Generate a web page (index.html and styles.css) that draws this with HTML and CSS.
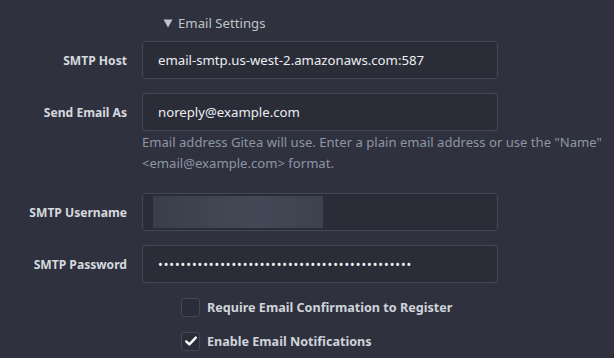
FILE: index.html
```html
<!DOCTYPE html>
<html lang="en">
<head>
    <meta charset="UTF-8">
    <title>Email Settings</title>
    <link rel="stylesheet" href="styles.css">
</head>
<body>
    <div class="settings">
        <div class="section-title">
            <svg class="caret" width="10" height="9" viewBox="0 0 10 9"><path d="M0.5 0.5 H9.5 L5 8.5 Z" fill="#bfc3cc"/></svg>
            Email Settings
        </div>

        <div class="field">
            <label for="smtpHost">SMTP Host</label>
            <input id="smtpHost" type="text" value="email-smtp.us-west-2.amazonaws.com:587">
        </div>

        <div class="field">
            <label for="sendAs">Send Email As</label>
            <input id="sendAs" type="text" value="noreply@example.com">
            <p class="help">Email address Gitea will use. Enter a plain email address or use the "Name" &lt;email@example.com&gt; format.</p>
        </div>

        <div class="field spaced">
            <label for="smtpUser">SMTP Username</label>
            <div class="masked">
                <input id="smtpUser" type="text" value="">
                <span class="blur"></span>
            </div>
        </div>

        <div class="field">
            <label for="smtpPass">SMTP Password</label>
            <input id="smtpPass" type="password" value="ABCDEFGHIJKLMNOPQRSTUVWXYZabcdefghijklmnopqrs">
        </div>

        <div class="check-row">
            <span class="box"></span>
            <span class="check-label">Require Email Confirmation to Register</span>
        </div>
        <div class="check-row">
            <span class="box checked">
                <svg width="14" height="14" viewBox="0 0 14 14"><path d="M2.2 7.4 L5.4 10.4 L11.8 3.6" fill="none" stroke="#ffffff" stroke-width="2.4" stroke-linecap="round" stroke-linejoin="round"/></svg>
            </span>
            <span class="check-label">Enable Email Notifications</span>
        </div>
    </div>
</body>
</html>
```

FILE: styles.css
```css
/* Reset */
* {
    margin: 0;
    padding: 0;
    box-sizing: border-box;
}

body {
    background-color: #2f323e;
    font-family: "Noto Sans", "Open Sans", sans-serif;
    color: #dcdee3;
    width: 614px;
    height: 358px;
    overflow: hidden;
}

.settings {
    padding-top: 13px;
}

.section-title {
    display: flex;
    align-items: center;
    margin-left: 163px;
    height: 20px;
    line-height: 20px;
    font-size: 13.2px;
    color: #bfc3cc;
}

.caret {
    margin-right: 5px;
}

/* label + control rows */
.field {
    display: grid;
    grid-template-columns: 127px 356px;
    column-gap: 15px;
    align-items: center;
    margin-top: 8px;
}

.field + .field {
    margin-top: 14px;
}

.field.spaced {
    margin-top: 19px;
}

.field label {
    text-align: right;
    font-size: 12.1px;
    font-weight: 700;
    color: #d6d9df;
}

.field input {
    width: 356px;
    height: 38px;
    padding: 0 15px;
    background-color: #2a2c37;
    border: 1px solid #444756;
    border-radius: 4px;
    color: #eceef2;
    font-family: "Noto Sans", "Open Sans", sans-serif;
    font-size: 13.2px;
    outline: none;
}

.field input[type="password"] {
    font-size: 12.5px;
    letter-spacing: 0.95px;
    color: #f2f4f8;
}

.help {
    grid-column: 2;
    width: 472px;
    margin-top: 1px;
    font-size: 13.1px;
    line-height: 21px;
    color: #8e95a4;
}

.masked {
    position: relative;
}

.blur {
    position: absolute; /* covers the hidden username */
    left: 11px;
    top: 3px;
    width: 170px;
    height: 32px;
    background: linear-gradient(90deg, #3a3d4a 0%, #424552 40%, #444755 60%, #3e414e 100%);
}

/* checkboxes */
.check-row {
    display: flex;
    align-items: center;
    margin-left: 181px;
    height: 20px;
    margin-top: 14px;
}

.check-row + .check-row {
    margin-top: 14px;
}

.box {
    width: 19px;
    height: 19px;
    border: 1px solid #444756;
    border-radius: 3px;
    background-color: #2a2c37;
    display: flex;
    align-items: center;
    justify-content: center;
    margin-right: 7px;
}

.check-label {
    font-size: 12.6px;
    font-weight: 700;
    color: #d0d3da;
}
```
